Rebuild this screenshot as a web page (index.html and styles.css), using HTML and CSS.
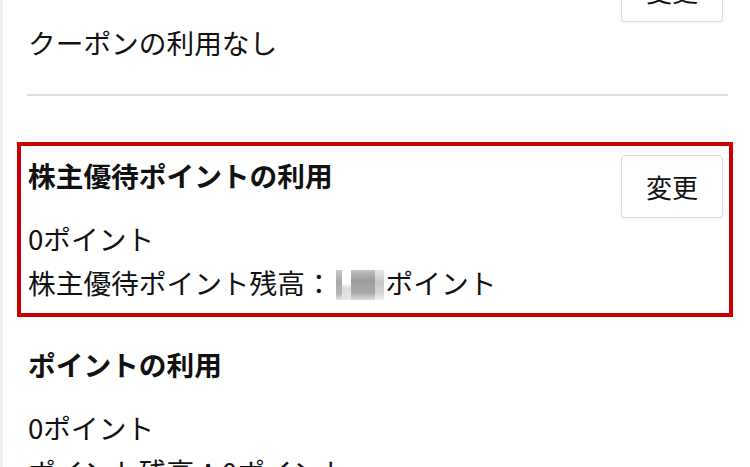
FILE: index.html
```html
<!DOCTYPE html>
<html lang="ja">
<head>
<meta charset="utf-8">
<link rel="stylesheet" href="styles.css">
</head>
<body>
<div class="page">
  <div class="section coupon">
    <div class="body">
      <h2 class="title">クーポンの利用</h2>
      <div class="line">クーポンの利用なし</div>
    </div>
    <button class="btn">変更</button>
  </div>
  <hr class="divider">
  <div class="section highlight">
    <div class="body">
      <h2 class="title">株主優待ポイントの利用</h2>
      <div class="line">0ポイント</div>
      <div class="line">株主優待ポイント残高：<span class="mosaic"><i class="m1"></i><i class="m2"></i><i class="m3"></i><i class="m4"></i></span>ポイント</div>
    </div>
    <button class="btn">変更</button>
  </div>
  <div class="section points">
    <div class="body">
      <h2 class="title">ポイントの利用</h2>
      <div class="line">0ポイント</div>
      <div class="line">ポイント残高：0ポイント</div>
    </div>
  </div>
</div>
</body>
</html>
```

FILE: styles.css
```css
html, body {
  margin: 0;
  background: #fff;
}
body {
  font-family: "Noto Sans CJK JP", "Noto Sans", sans-serif;
  color: #111;
}
.page {
  height: 467px;
  overflow: hidden;
  border-left: 3px solid #f1f1f1;
  box-sizing: border-box;
}
.section {
  display: flex;
  justify-content: space-between;
  align-items: flex-start;
  padding: 0 27px 0 25px;
}
.coupon {
  margin-top: -41px;
}
.title {
  font-size: 27.7px;
  font-weight: bold;
  line-height: 40px;
  margin: 0 0 21px;
}
.line {
  font-size: 27.7px;
  line-height: 44px;
  white-space: nowrap;
}
.btn {
  width: 102px;
  height: 63px;
  box-sizing: border-box;
  border: 1px solid #dcdcdc;
  border-radius: 4px;
  background: #fff;
  font-family: inherit;
  font-size: 26px;
  color: #111;
  padding: 0;
  box-shadow: 0 1px 2px rgba(0, 0, 0, 0.08);
  flex-shrink: 0;
}
.divider {
  margin: 30px 22px 46px 24px;
  border: 0;
  border-top: 2px solid #dedede;
  height: 0;
}
.highlight {
  margin: 0 17px 27px 14px;
  border: 4px solid #cc0000;
  padding: 9px 6px 9px 7px;
}
.mosaic {
  display: inline-flex;
  vertical-align: -6px;
  height: 30px;
  margin: 0 2px 0 3px;
}
.mosaic i {
  display: block;
  height: 100%;
}
.m1 { width: 6px; background: linear-gradient(#c9c9c9, #a9a9a9 40%, #b5b5b5 80%, #e6e6e6); }
.m2 { width: 9px; background: linear-gradient(#fff 45%, #dadada 60%, #e8e8e8); }
.m3 { width: 24px; background: linear-gradient(#c2c2c2, #9c9c9c 35%, #a9a9a9 75%, #dcdcdc); }
.m4 { width: 9px; background: linear-gradient(#e8e8e8, #c8c8c8 40%, #d4d4d4 75%, #f2f2f2); }
```
